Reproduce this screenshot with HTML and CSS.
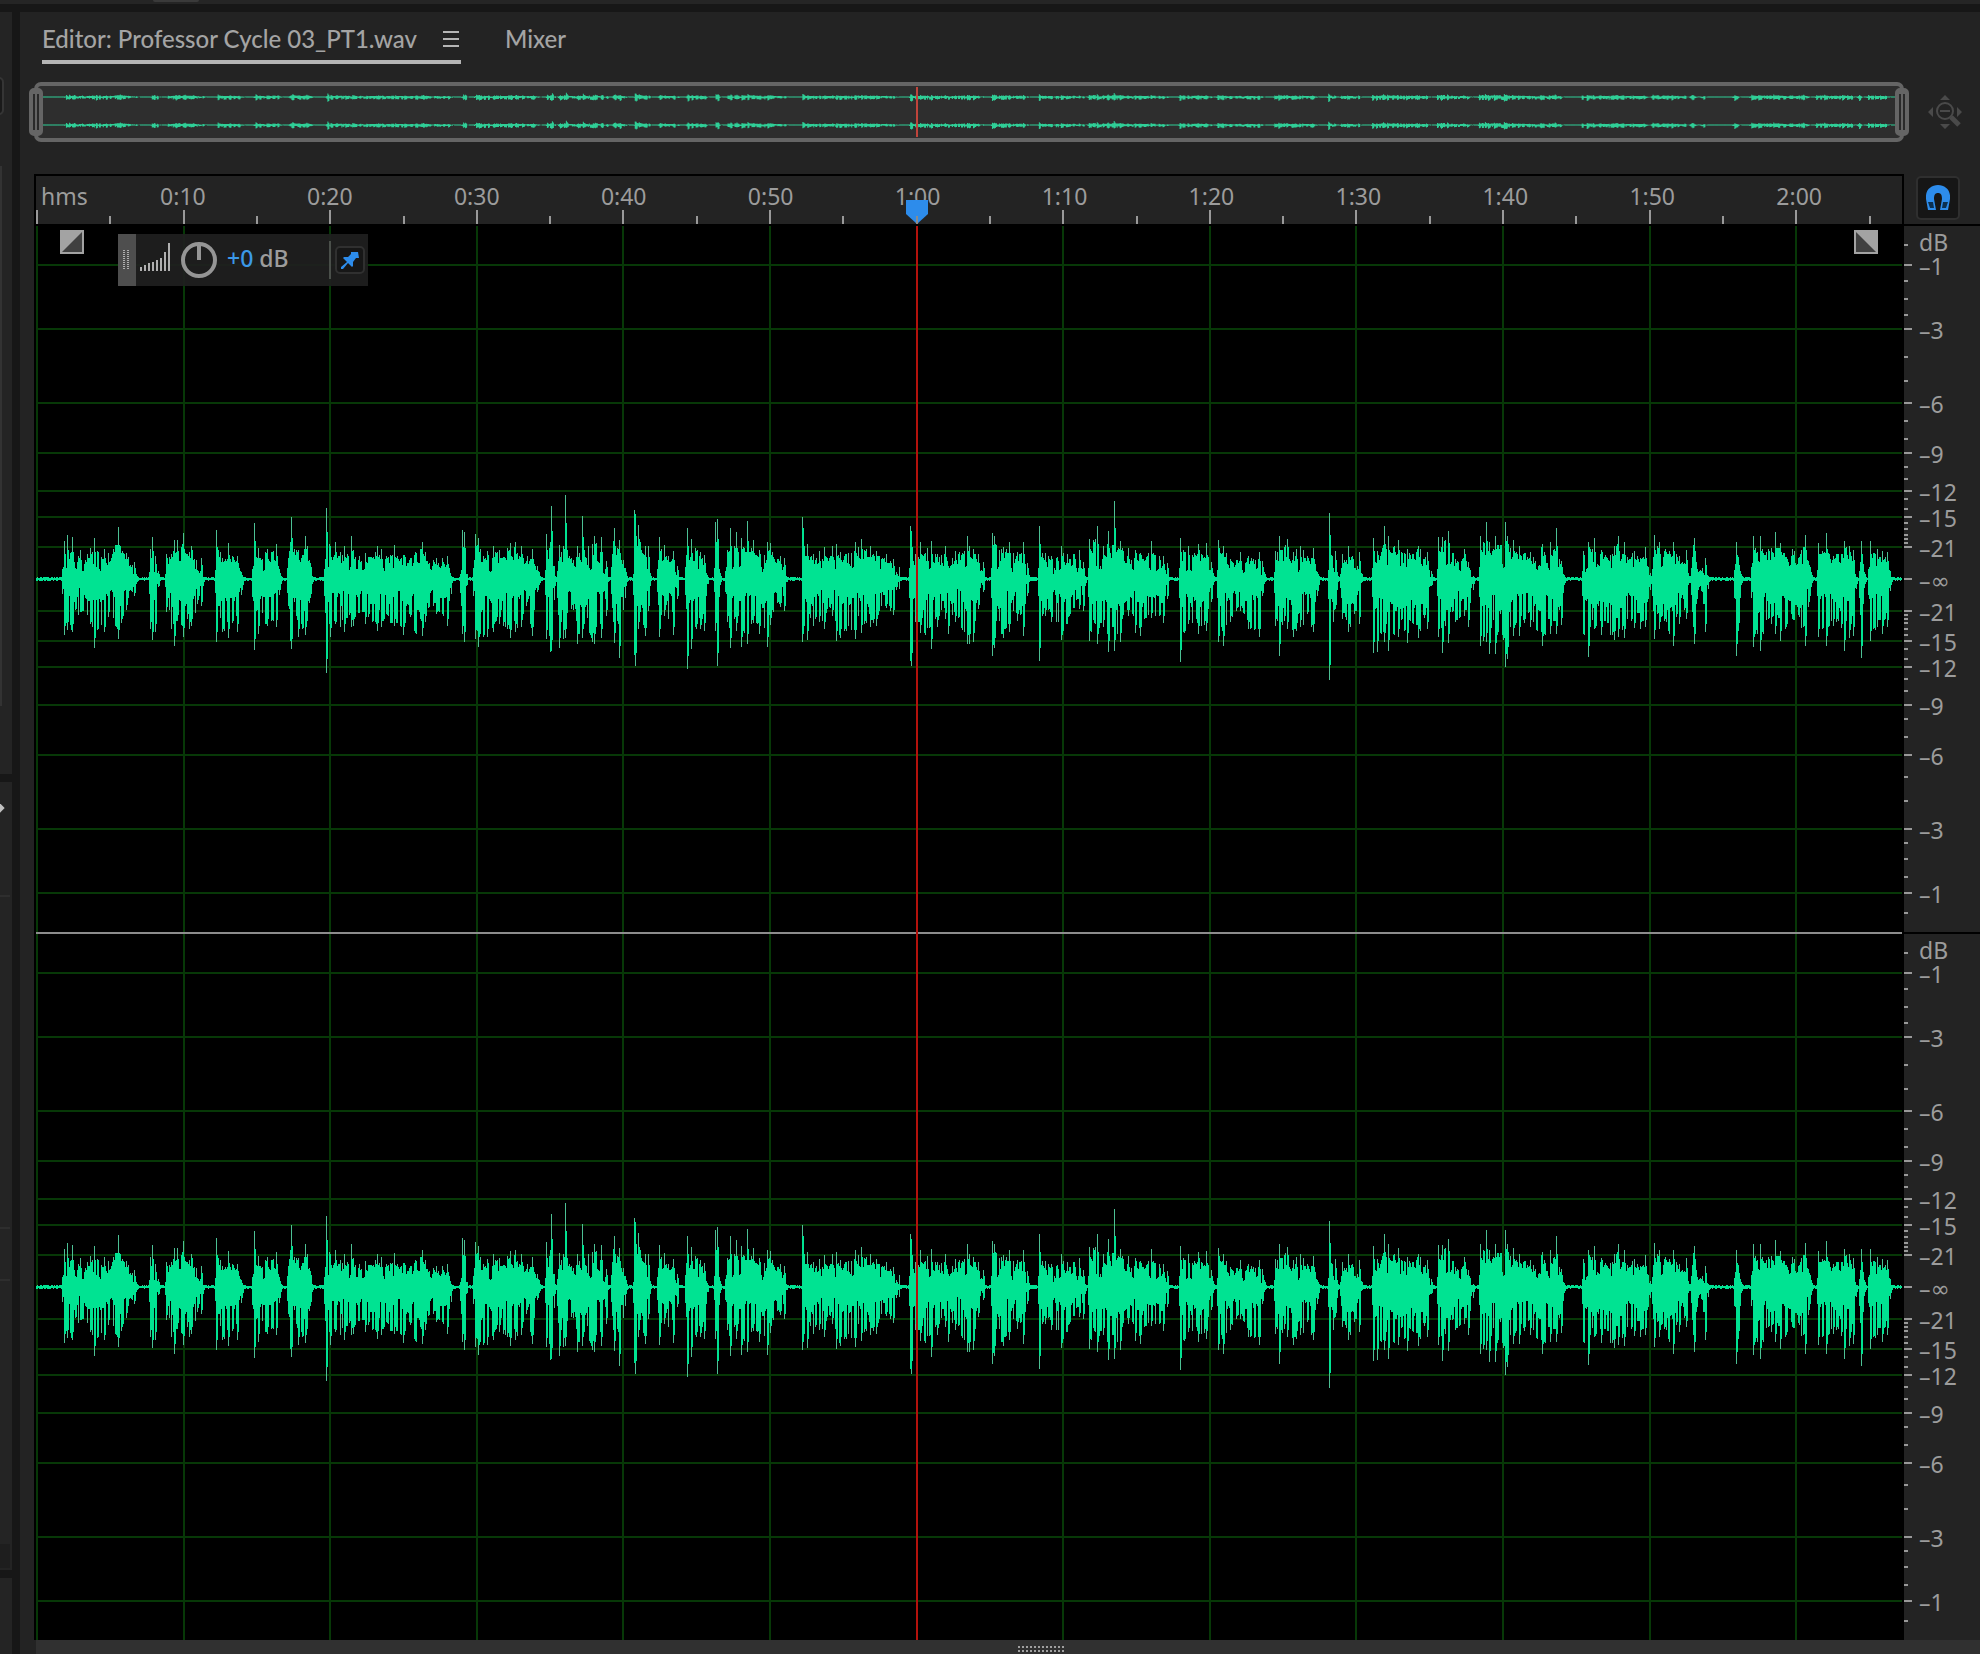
FILE: index.html
```html
<!DOCTYPE html>
<html lang="en">
<head>
<meta charset="utf-8">
<title>Editor: Professor Cycle 03_PT1.wav</title>
<link rel="stylesheet" href="styles.css">
</head>
<body>
<div class="topbar"><span class="topbar-pill"></span></div>
<div class="workspace">
  <aside class="dock">
    <div class="dock-panel dock-files"><span class="dock-field"></span><span class="dock-edge"></span></div>
    <div class="dock-panel dock-media"><span class="dock-arrow"></span><span class="dock-rule rule-a"></span><span class="dock-rule rule-b"></span><span class="dock-rule rule-c"></span><span class="dock-box"></span></div>
    <div class="dock-panel dock-history"></div>
  </aside>

  <main class="editor">
    <nav class="tabs">
      <div class="tab tab-active">
        <button class="tab-name" type="button">Editor: Professor Cycle 03_PT1.wav</button>
        <button class="tab-menu" type="button" aria-label="Panel menu"><span></span><span></span><span></span></button>
      </div>
      <div class="tab"><button class="tab-name" type="button">Mixer</button></div>
    </nav>

    <div class="navigator">
      <div class="overview">
        <svg class="overview-wave" viewBox="0 0 1866 52" preserveAspectRatio="none" aria-hidden="true"></svg>
        <span class="overview-playhead"></span>
        <span class="handle handle-left"></span>
        <span class="handle handle-right"></span>
      </div>
      <button class="zoom-out" type="button" aria-label="Zoom out full">
        <svg width="36" height="36" viewBox="0 0 36 36" aria-hidden="true">
          <path d="M13 6l5-5 5 5zM13 30l5 5 5-5zM6 13l-5 5 5 5zM30 13l5 5-5 5z" fill="#4a4a4a"/>
          <circle cx="18" cy="17" r="8" fill="none" stroke="#4a4a4a" stroke-width="2"/>
          <path d="M13 17h10" stroke="#4a4a4a" stroke-width="2"/>
          <path d="M24 23l8 8" stroke="#4a4a4a" stroke-width="5"/>
        </svg>
      </button>
    </div>

    <div class="stage">
      <div class="ruler">
        <svg class="ruler-ticks" aria-hidden="true"></svg>
        <div class="ruler-labels">
          <span class="unit">hms</span>
          <span>0:10</span><span>0:20</span><span>0:30</span><span>0:40</span><span>0:50</span><span>1:00</span>
          <span>1:10</span><span>1:20</span><span>1:30</span><span>1:40</span><span>1:50</span><span>2:00</span>
        </div>
        <svg class="marker" width="22" height="24" viewBox="0 0 22 24" aria-hidden="true">
          <path d="M0 0h22v14L11 24 0 14z" fill="#2d8ceb"/>
          <path d="M11 16v8" stroke="#8c8c8c" stroke-width="2"/>
        </svg>
      </div>
      <div class="corner">
        <button class="snap" type="button" aria-label="Toggle snapping">
          <svg width="24" height="26" viewBox="0 0 24 26" aria-hidden="true">
            <path d="M2 25L0 14C-1 5 5 0 12 0s13 5 12 14l-2 11h-8l2-11c0-4-1-6-4-6s-4 2-4 6l2 11z" fill="#2d8ceb"/>
            <path d="M2 17h5l1 6H4zM22 17h-5l-1 6h4z" fill="#0c3050"/>
          </svg>
        </button>
      </div>

      <div class="tracks">
        <div class="channel"><svg class="grid-lines" aria-hidden="true"></svg><svg class="wave" viewBox="0 0 1866 706" preserveAspectRatio="none" aria-hidden="true"></svg></div>
        <div class="channel"><svg class="grid-lines" aria-hidden="true"></svg><svg class="wave" viewBox="0 0 1866 706" preserveAspectRatio="none" aria-hidden="true"></svg></div>
        <span class="playhead"></span>

        <button class="fade fade-in" type="button" aria-label="Fade in"><svg width="24" height="24" aria-hidden="true"><path d="M0 0h24v24H0z" fill="#a3a3a3"/><path d="M22 2v20H2z" fill="#404040"/></svg></button>
        <button class="fade fade-out" type="button" aria-label="Fade out"><svg width="24" height="24" aria-hidden="true"><path d="M0 0h24v24H0z" fill="#a3a3a3"/><path d="M2 2v20h20z" fill="#404040"/></svg></button>

        <div class="hud">
          <span class="hud-grip"><svg width="8" height="20" aria-hidden="true"><path d="M1 0v20M5 0v20" stroke="#b0b0b0" stroke-width="2" stroke-dasharray="1 1"/></svg></span>
          <svg class="hud-bars" width="32" height="28" aria-hidden="true"><path d="M1 28v-4M5 28v-6M9 28v-8M13 28v-9M17 28v-11M21 28v-13M25 28V9M29 28V0" stroke="#b0b0b0" stroke-width="2"/></svg>
          <svg class="hud-knob" width="36" height="36" aria-hidden="true"><circle cx="18" cy="18" r="16" fill="none" stroke="#959595" stroke-width="4"/><path d="M18 3v15" stroke="#959595" stroke-width="4"/></svg>
          <span class="hud-gain"><b>+0</b> dB</span>
          <button class="hud-pin" type="button" aria-label="Pin HUD"><svg width="18" height="18" viewBox="0 0 18 18" aria-hidden="true"><path d="M10 1l7 0 1 6-3 0-3 4 0 4-1 1-4-4-5 6-2 0 0-2 6-5-4-4 1-1 4 0 3-3z" fill="#2d8ceb"/></svg></button>
        </div>
      </div>
      <div class="scales">
        <svg class="scale" role="img" aria-label="Left channel level, dB"></svg>
        <svg class="scale" role="img" aria-label="Right channel level, dB"></svg>
      </div>
      <div class="splitter"><span class="splitter-grip"></span></div>
    </div>
  </main>
</div>
<script src="script.js"></script>
</body>
</html>
```
FILE: styles.css
```css
* { box-sizing: border-box; }
body {
  margin: 0;
  min-height: 100vh;
  display: flex;
  flex-direction: column;
  gap: 8px;
  background: #171717;
  color: #9c9c9c;
  font: 23px/32px "Noto Sans", "Open Sans", sans-serif;
}
button { padding: 0; border: 0; background: none; color: inherit; font: inherit; }
svg { display: block; }

.topbar { height: 4px; background: #252525; }
.topbar-pill { display: block; width: 46px; height: 2px; margin-left: 153px; background: #3a3a3a; border-radius: 0 0 4px 4px; }

.workspace { flex: 1; display: flex; gap: 8px; }

.dock { width: 12px; display: flex; flex-direction: column; gap: 8px; }
.dock-panel { position: relative; overflow: hidden; background: #242424; }
.dock-files { flex: 762; }
.dock-media { flex: 788; }
.dock-history { flex: 76; }
.dock-field { position: absolute; left: -10px; top: 65px; width: 14px; height: 38px; border: 2px solid #353535; border-radius: 5px; background: #1a1a1a; }
.dock-edge { position: absolute; left: 0; top: 154px; bottom: 68px; width: 2px; background: #333; }
.dock-arrow { position: absolute; left: -5px; top: 22px; width: 8px; height: 8px; background: #c0c0c0; transform: rotate(45deg); }
.dock-rule { position: absolute; left: 0; width: 10px; height: 2px; background: #2e2e2e; }
.rule-a { top: 113px; }
.rule-b { top: 445px; }
.rule-c { top: 497px; }
.dock-box { position: absolute; left: 0; bottom: 2px; width: 10px; height: 24px; background: #1e1e1e; }

.editor { flex: 1; min-width: 0; display: flex; flex-direction: column; padding-left: 14px; background: #232323; }

.tabs { display: flex; gap: 44px; height: 52px; padding-left: 8px; font-family: Lato, "Noto Sans", sans-serif; font-size: 24px; font-weight: 500; }
.tab { display: flex; align-items: center; gap: 26px; padding-top: 10px; padding-bottom: 4px; border-bottom: 4px solid transparent; white-space: nowrap; color: #a4a4a4; }
.tab-active { border-color: #b5b5b5; }
.tab-menu { display: flex; flex-direction: column; gap: 5px; width: 18px; }
.tab-menu span { height: 2px; width: 16px; background: #b5b5b5; }

.navigator { display: flex; margin-top: 18px; height: 60px; align-items: center; }
.overview { position: relative; flex: 1; height: 60px; border: 4px solid #656565; border-radius: 7px; background: #2e2e2e; }
.overview-wave { width: 100%; height: 52px; }
.overview-playhead { position: absolute; left: calc(47.2% - 1px); top: 1px; width: 2px; height: 50px; background: #c0443b; }
.handle { position: absolute; top: 2px; width: 14px; height: 48px; border: 4px solid #656565; border-top-width: 6px; border-bottom-width: 6px; border-radius: 5px; background: linear-gradient(90deg, #2a2a2a 2px, #656565 2px 4px, #2a2a2a 4px); }
.handle-left { left: -9px; }
.handle-right { right: -9px; }
.zoom-out { width: 76px; display: flex; justify-content: center; padding-left: 6px; }

.stage { flex: 1; display: grid; grid-template-columns: minmax(0, 1fr) 76px; grid-template-rows: 52px 1fr 14px; margin-top: 32px; }
.ruler { position: relative; border: 2px solid #000; background: #232323; }
.ruler-ticks { position: absolute; left: 0; bottom: 0; width: 100%; height: 14px; }
.ruler-labels { display: grid; grid-template-columns: 5fr repeat(12, 10fr) 2fr; padding-top: 4px; text-align: center; }
.unit { padding-left: 5px; text-align: left; }
.marker { position: absolute; left: calc(47.2% - 11px); bottom: 0; }
.corner { display: flex; padding: 2px 0 0 12px; border-bottom: 2px solid #000; }
.snap { width: 44px; height: 44px; display: flex; align-items: center; justify-content: center; border: 2px solid #2f2f2f; border-radius: 5px; background: #161616; }

.tracks { position: relative; display: flex; flex-direction: column; border: solid #000; border-width: 0 2px; background: #000; }
.channel { position: relative; flex: 1; min-height: 320px; }
.channel + .channel { border-top: 2px solid #8c8c8c; flex-basis: 2px; }
.grid-lines, .wave { position: absolute; left: 0; top: 0; width: 100%; height: 100%; }
.grid-lines line { stroke: #073807; stroke-width: 2; shape-rendering: crispEdges; }
.playhead { position: absolute; left: calc(47.2% - 1px); top: 0; bottom: 0; width: 2px; background: #b3120c; }

.fade { position: absolute; top: 4px; }
.fade-in { left: 24px; }
.fade-out { right: 24px; }

.hud { position: absolute; left: 82px; top: 8px; width: 250px; height: 52px; display: flex; align-items: center; background: rgba(32, 32, 32, .92); }
.hud-grip { width: 18px; height: 52px; display: flex; align-items: center; justify-content: center; background: #4e4e4e; }
.hud-bars { margin: 0 9px 6px 4px; }
.hud-pin { width: 30px; height: 28px; margin: 0 3px 0 4px; display: flex; align-items: center; justify-content: center; border: 2px solid #303030; border-radius: 5px; background: #171717; }
.hud-gain { flex: 1; height: 38px; margin-left: 10px; border-right: 2px solid #4a4f4a; line-height: 34px; font-weight: 500; }
.hud-gain b { font-weight: 500; color: #3b98e8; }

.scales { display: flex; flex-direction: column; }
.scale { flex: 1; width: 100%; min-height: 320px; }
.scale + .scale { border-top: 2px solid #000; flex-basis: 2px; }
.scale text { fill: #9c9c9c; }
.scale .infinity { font-family: "DejaVu Sans", sans-serif; }
.scale line, .ruler-ticks line { stroke: #999; stroke-width: 2; shape-rendering: crispEdges; }

.splitter { grid-column: 1 / -1; display: flex; justify-content: center; align-items: flex-end; padding-bottom: 2px; padding-left: 68px; margin-left: 2px; background: #303030; }
.splitter-grip { width: 48px; height: 6px; background: linear-gradient(#303030, #303030) 0 2px / 48px 2px no-repeat, repeating-linear-gradient(90deg, #a0a0a0 0 2px, #303030 2px 4px); }
```
FILE: script.js
```javascript
const NS = 'http://www.w3.org/2000/svg';
const WIDTH = 1866;
const HEIGHT = 706;
const MIDDLE = 353;

function add(parent, name, attrs, text) {
  const el = document.createElementNS(NS, name);
  for (const key in attrs) el.setAttribute(key, attrs[key]);
  if (text) el.textContent = text;
  parent.appendChild(el);
  return el;
}

// Seconds to percent of the timeline.
const timeX = s => ((1 + s * 14.66) / WIDTH * 100) + '%';
// Level offset from the zero line to percent of a channel's height.
const levelY = d => ((MIDDLE + d) / HEIGHT * 100) + '%';

const LEVELS = [[32, '–21'], [62, '–15'], [88, '–12'], [126, '–9'], [176, '–6'], [250, '–3'], [314, '–1']];
const MINOR = [36, 40, 44, 50, 56, 70, 80, 100, 112, 140, 158, 198, 222, 264, 280, 298, 334];

const ruler = document.querySelector('.ruler-ticks');
for (let s = 0; s <= 125; s += 5) {
  add(ruler, 'line', { x1: timeX(s), x2: timeX(s), y1: s % 10 ? 6 : 0, y2: 14 });
}

document.querySelectorAll('.grid-lines').forEach(svg => {
  for (let s = 0; s <= 120; s += 10) add(svg, 'line', { x1: timeX(s), x2: timeX(s), y1: 0, y2: '100%' });
  for (const [d] of LEVELS) {
    for (const y of [levelY(-d), levelY(d)]) add(svg, 'line', { x1: 0, x2: '100%', y1: y, y2: y });
  }
});

document.querySelectorAll('.scale').forEach(svg => {
  const tick = (d, w) => add(svg, 'line', { x1: 0, x2: w, y1: levelY(d), y2: levelY(d) });
  const label = (d, text) => add(svg, 'text', { x: 15, y: levelY(d), dy: 10 }, text);
  tick(0, 8);
  const zero = label(0, '–');
  add(zero, 'tspan', { class: 'infinity' }, '∞');
  label(-338, 'dB');
  for (const [d, text] of LEVELS) {
    for (const side of [-1, 1]) {
      tick(d * side, 8);
      label(d * side, text);
    }
  }
  for (const d of MINOR) { tick(-d, 4); tick(d, 4); }
});

// Phrases of the recording: [start, end, [[position, peak above, peak below], ...]].
const TAKES = [
  [0, [
    [97, 325, [[103,114,167],[112,133,152],[127,125,158],[149,88,100],[181,92,135],[191,124,208],[222,90,160],[234,78,115],[263,155,180],[289,78,92],[313,50,50]]],
    [358, 390, [[361,90,150],[367,126,184],[375,70,158],[385,25,25]]],
    [405, 522, [[409,75,100],[433,117,200],[442,118,125],[460,137,173],[476,80,150],[484,100,140],[512,62,80]]],
    [556, 638, [[559,147,188],[577,62,160],[595,108,178],[620,70,160]]],
    [666, 752, [[671,167,212],[683,92,165],[712,90,140],[737,105,145]]],
    [771, 848, [[782,185,210],[803,88,175],[825,130,168]]],
    [882, 1268, [[888,212,282],[899,100,174],[916,110,135],[943,98,160],[962,128,143],[970,88,140],[1004,78,135],[1040,100,155],[1053,90,145],[1092,102,140],[1119,72,168],[1175,112,172],[1184,80,130],[1218,62,105],[1252,68,142]]],
    [1290, 1312, [[1295,146,165],[1301,140,188]]],
    [1330, 1535, [[1334,136,180],[1343,122,203],[1372,85,175],[1390,98,160],[1408,86,135],[1431,93,150],[1440,107,178],[1456,112,160],[1473,98,145],[1490,68,70],[1505,90,170],[1520,38,38]]]
  ]],
  [1440, [
    [105, 138, [[109,134,180],[121,110,218],[124,220,215]]],
    [142, 295, [[148,102,208],[160,100,180],[166,253,178],[184,62,90],[202,98,195],[217,190,178],[245,105,190],[253,130,195],[274,125,178],[288,55,110]]],
    [304, 352, [[312,152,192],[328,118,236]]],
    [368, 424, [[371,208,228],[374,195,260],[385,162,150],[406,100,172],[414,98,95]]],
    [442, 505, [[446,127,175],[463,102,110],[488,85,168],[500,40,60]]],
    [525, 595, [[532,152,270],[543,120,210],[571,82,150],[582,72,155]]],
    [612, 632, [[616,170,155],[620,180,260]]],
    [646, 830, [[650,88,130],[661,152,208],[679,141,155],[694,122,205],[710,175,195],[730,118,132],[746,88,165],[772,110,205],[781,108,138],[810,68,85],[822,62,95]]],
    [875, 1168, [[877,185,190],[880,152,165],[892,105,183],[926,83,130],[943,95,150],[965,100,110],[978,105,185],[991,80,178],[1036,110,180],[1052,120,162],[1079,98,145],[1098,85,140],[1129,75,88],[1150,60,108],[1166,35,30]]],
    [1198, 1425, [[1201,158,245],[1204,145,260],[1216,75,130],[1231,112,162],[1264,115,210],[1282,76,145],[1306,100,120],[1315,40,165],[1336,85,130],[1372,128,195],[1378,100,195],[1390,90,190],[1405,75,90],[1418,50,40]]]
  ]],
  [2880, [
    [2, 120, [[7,137,232],[13,130,208],[40,95,178],[58,110,160],[82,80,125],[99,112,170],[112,48,50]]],
    [144, 288, [[147,160,245],[166,78,110],[184,68,130],[214,100,182],[232,75,135],[268,86,90],[280,50,95]]],
    [294, 538, [[298,120,185],[322,160,195],[340,100,145],[355,143,218],[373,233,215],[389,115,190],[415,92,110],[436,88,162],[451,78,170],[482,115,118],[518,68,132],[530,48,60]]],
    [567, 674, [[571,124,250],[595,100,135],[625,104,166],[649,107,155],[664,50,70]]],
    [681, 828, [[685,118,190],[699,100,200],[720,60,130],[750,80,95],[775,70,150],[806,80,175],[815,55,50]]],
    [852, 988, [[856,85,140],[867,130,230],[892,120,150],[910,80,175],[919,90,155],[931,98,145],[970,92,160]]],
    [1014, 1048, [[1018,198,302],[1036,85,90]]],
    [1050, 1118, [[1056,75,120],[1075,98,160],[1108,82,135]]],
    [1145, 1328, [[1148,122,222],[1162,85,218],[1183,160,190],[1195,130,215],[1225,118,175],[1250,90,192],[1285,100,178],[1310,82,150],[1322,25,20]]],
    [1342, 1453, [[1345,127,175],[1357,125,222],[1375,145,192],[1394,60,130],[1421,90,110],[1433,50,145]]]
  ]],
  [4230, [
    [117, 376, [[120,130,200],[138,172,190],[147,112,225],[165,130,225],[196,172,265],[200,130,240],[219,118,172],[236,98,170],[271,80,145],[305,106,202],[329,110,165],[349,152,165],[362,55,138]]],
    [426, 632, [[430,85,165],[444,112,235],[463,122,150],[482,88,168],[521,100,182],[535,128,175],[551,110,178],[583,85,148],[600,62,150],[616,95,145]]],
    [636, 750, [[643,132,180],[658,112,150],[698,110,200],[716,70,135],[738,88,120]]],
    [753, 808, [[763,124,195],[778,25,25],[795,62,158]]],
    [883, 908, [[889,110,230],[895,65,155]]],
    [933, 1116, [[939,130,205],[961,128,215],[994,92,135],[1006,142,165],[1021,108,185],[1057,90,120],[1096,132,200]]],
    [1131, 1250, [[1135,107,175],[1159,137,200],[1178,70,140],[1213,115,215],[1228,100,178],[1240,88,170]]],
    [1257, 1278, [[1264,115,238]]],
    [1284, 1356, [[1290,114,185],[1312,90,145],[1327,85,165],[1340,80,145]]]
  ]]
];

let seed = 7;
function random() {
  seed = (seed * 16807) % 2147483647;
  return seed / 2147483647;
}

const up = new Array(WIDTH).fill(0).map(() => 1 + Math.round(random()));
const down = new Array(WIDTH).fill(0).map(() => 1 + Math.round(random()));

// Loudness between two neighbouring peaks.
function between(peaks, at, side) {
  let next = peaks.findIndex(p => p[0] >= at);
  if (next < 0) return peaks[peaks.length - 1][side];
  if (next === 0) return peaks[0][side];
  const a = peaks[next - 1], b = peaks[next];
  return a[side] + (b[side] - a[side]) * (at - a[0]) / (b[0] - a[0]);
}

for (const [offset, phrases] of TAKES) {
  for (const [start, end, peaks] of phrases) {
    const first = Math.round((offset + start) / 3) - 6;
    const last = Math.round((offset + end) / 3) - 6;
    let runLeft = 0, deep = false, top = 0.5, bottom = 0.5;
    for (let x = first; x <= last && x < WIDTH; x++) {
      const at = (x + 6) * 3 - offset;
      const edge = Math.min(1, (x - first + 1) / 3, (last - x + 1) / 8);
      if (runLeft-- <= 0) {
        deep = !deep;
        runLeft = Math.floor(random() * 3);
        const dip = random() < 0.12;
        top = dip ? 0.22 : deep ? 0.55 + random() * 0.25 : 0.35 + random() * 0.3;
        bottom = deep ? 0.6 + random() * 0.3 : 0.2 + random() * 0.3;
      }
      const above = Math.min(46, between(peaks, at, 1) / 3);
      const below = Math.min(64, between(peaks, at, 2) / 3);
      up[x] = Math.max(2, edge * (above * top + random() * 5));
      down[x] = Math.max(2, edge * (below * bottom + random() * 5));
    }
    for (const [at, above, below] of peaks) {
      const x = Math.round((offset + at) / 3) - 6;
      up[x] = above / 3;
      down[x] = below / 3;
      if (x < last) {
        up[x + 1] = Math.max(up[x + 1], above / 3 * 0.66);
        down[x + 1] = Math.max(down[x + 1], below / 3 * 0.85);
      }
    }
  }
}

const near = (a, x) => Math.min(a[x], Math.max(a[x - 1] || 0, a[x + 1] || 0));

function columns(middle, scale, a, b) {
  let d = '';
  for (let x = 0; x < WIDTH; x++) {
    const t = a(x) * scale, h = (a(x) + b(x)) * scale;
    d += `M${x} ${(middle - t).toFixed(1)}h1v${h.toFixed(1)}h-1z`;
  }
  return d;
}

const full = columns(MIDDLE, 1, x => up[x], x => down[x]);
const body = columns(MIDDLE, 1, x => near(up, x), x => near(down, x));
document.querySelectorAll('.wave').forEach(svg => {
  add(svg, 'path', { d: full, fill: '#4cc094', 'shape-rendering': 'crispEdges' });
  add(svg, 'path', { d: body, fill: '#00e392', 'shape-rendering': 'crispEdges' });
});

const overview = document.querySelector('.overview-wave');
for (const y of [11, 39]) {
  add(overview, 'path', { d: columns(y, 0.05, x => up[x] < 3 ? 9 : up[x], x => down[x] < 3 ? 9 : down[x]), fill: '#2fcf97' });
}
```
